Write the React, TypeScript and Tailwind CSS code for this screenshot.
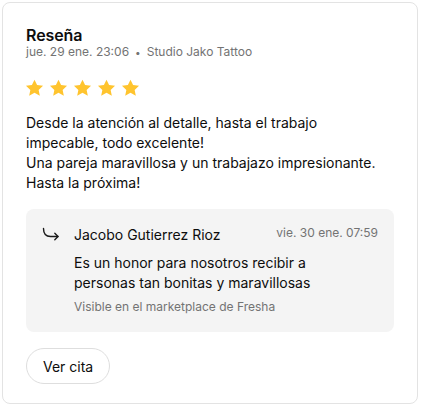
import React from "react";

function Star() {
  return (
    <svg width="19" height="18" viewBox="0 0 24 23" aria-hidden="true">
      <path
        d="M12 0.8l3.3 7 7.6 0.9-5.6 5.2 1.5 7.6L12 17.7l-6.8 3.8 1.5-7.6L1.1 8.7l7.6-0.9z"
        fill="#FFC42E"
      />
    </svg>
  );
}

function ReplyArrow() {
  return (
    <svg width="18" height="14" viewBox="0 0 18 14" fill="none" aria-hidden="true">
      <path d="M1.5 1.5C1.5 6.5 3.5 9.5 8.5 9.5H16" stroke="#1a1a1a" strokeWidth="1.4" strokeLinecap="round" />
      <path d="M12.8 6.3L16 9.5L12.8 12.7" stroke="#1a1a1a" strokeWidth="1.4" strokeLinecap="round" strokeLinejoin="round" />
    </svg>
  );
}

export default function App() {
  return (
    <div className="bg-white w-[421px] h-[411px] pt-[2px] pl-[2px]" style={{ fontFamily: "Inter, 'Noto Sans', sans-serif" }}>
      <div className="w-[416px] h-[402px] border border-[#e3e3e3] rounded-[8px] bg-white pt-[22px] px-[23px] text-[#0d0d0d]">
        <div className="text-[16px] leading-[20px] font-semibold tracking-[-0.1px]">Reseña</div>
        <div className="text-[12px] leading-[14px] text-[#737373] flex items-center">
          <span>jue. 29 ene. 23:06</span>
          <span className="mx-[6px] text-[10px]">•</span>
          <span>Studio Jako Tattoo</span>
        </div>
        <div className="flex gap-[5px] mt-[20px] -ml-[1px]">
          <Star />
          <Star />
          <Star />
          <Star />
          <Star />
        </div>
        <div className="mt-[16px] text-[14px] leading-[20px] max-w-[355px]">
          <p>Desde la atención al detalle, hasta el trabajo impecable, todo excelente!</p>
          <p>Una pareja maravillosa y un trabajazo impresionante.</p>
          <p>Hasta la próxima!</p>
        </div>
        <div className="mt-[16px] bg-[#f4f4f4] rounded-[8px] px-[16px] pt-[16px] pb-[17px] flex gap-[14px]">
          <div className="pt-[2px]">
            <ReplyArrow />
          </div>
          <div className="flex-1">
            <div className="flex justify-between items-start">
              <span className="text-[14px] leading-[20px]">Jacobo Gutierrez Rioz</span>
              <span className="text-[12px] leading-[16px] text-[#737373]">vie. 30 ene. 07:59</span>
            </div>
            <div className="mt-[8px] text-[14px] leading-[20px] pr-[40px]">
              Es un honor para nosotros recibir a personas tan bonitas y maravillosas
            </div>
            <div className="mt-[6px] text-[12px] leading-[16px] text-[#737373]">
              Visible en el marketplace de Fresha
            </div>
          </div>
        </div>
        <button className="mt-[16px] h-[36px] px-[16px] rounded-full border border-[#dedede] bg-white text-[14px] text-[#0d0d0d]">
          Ver cita
        </button>
      </div>
    </div>
  );
}
